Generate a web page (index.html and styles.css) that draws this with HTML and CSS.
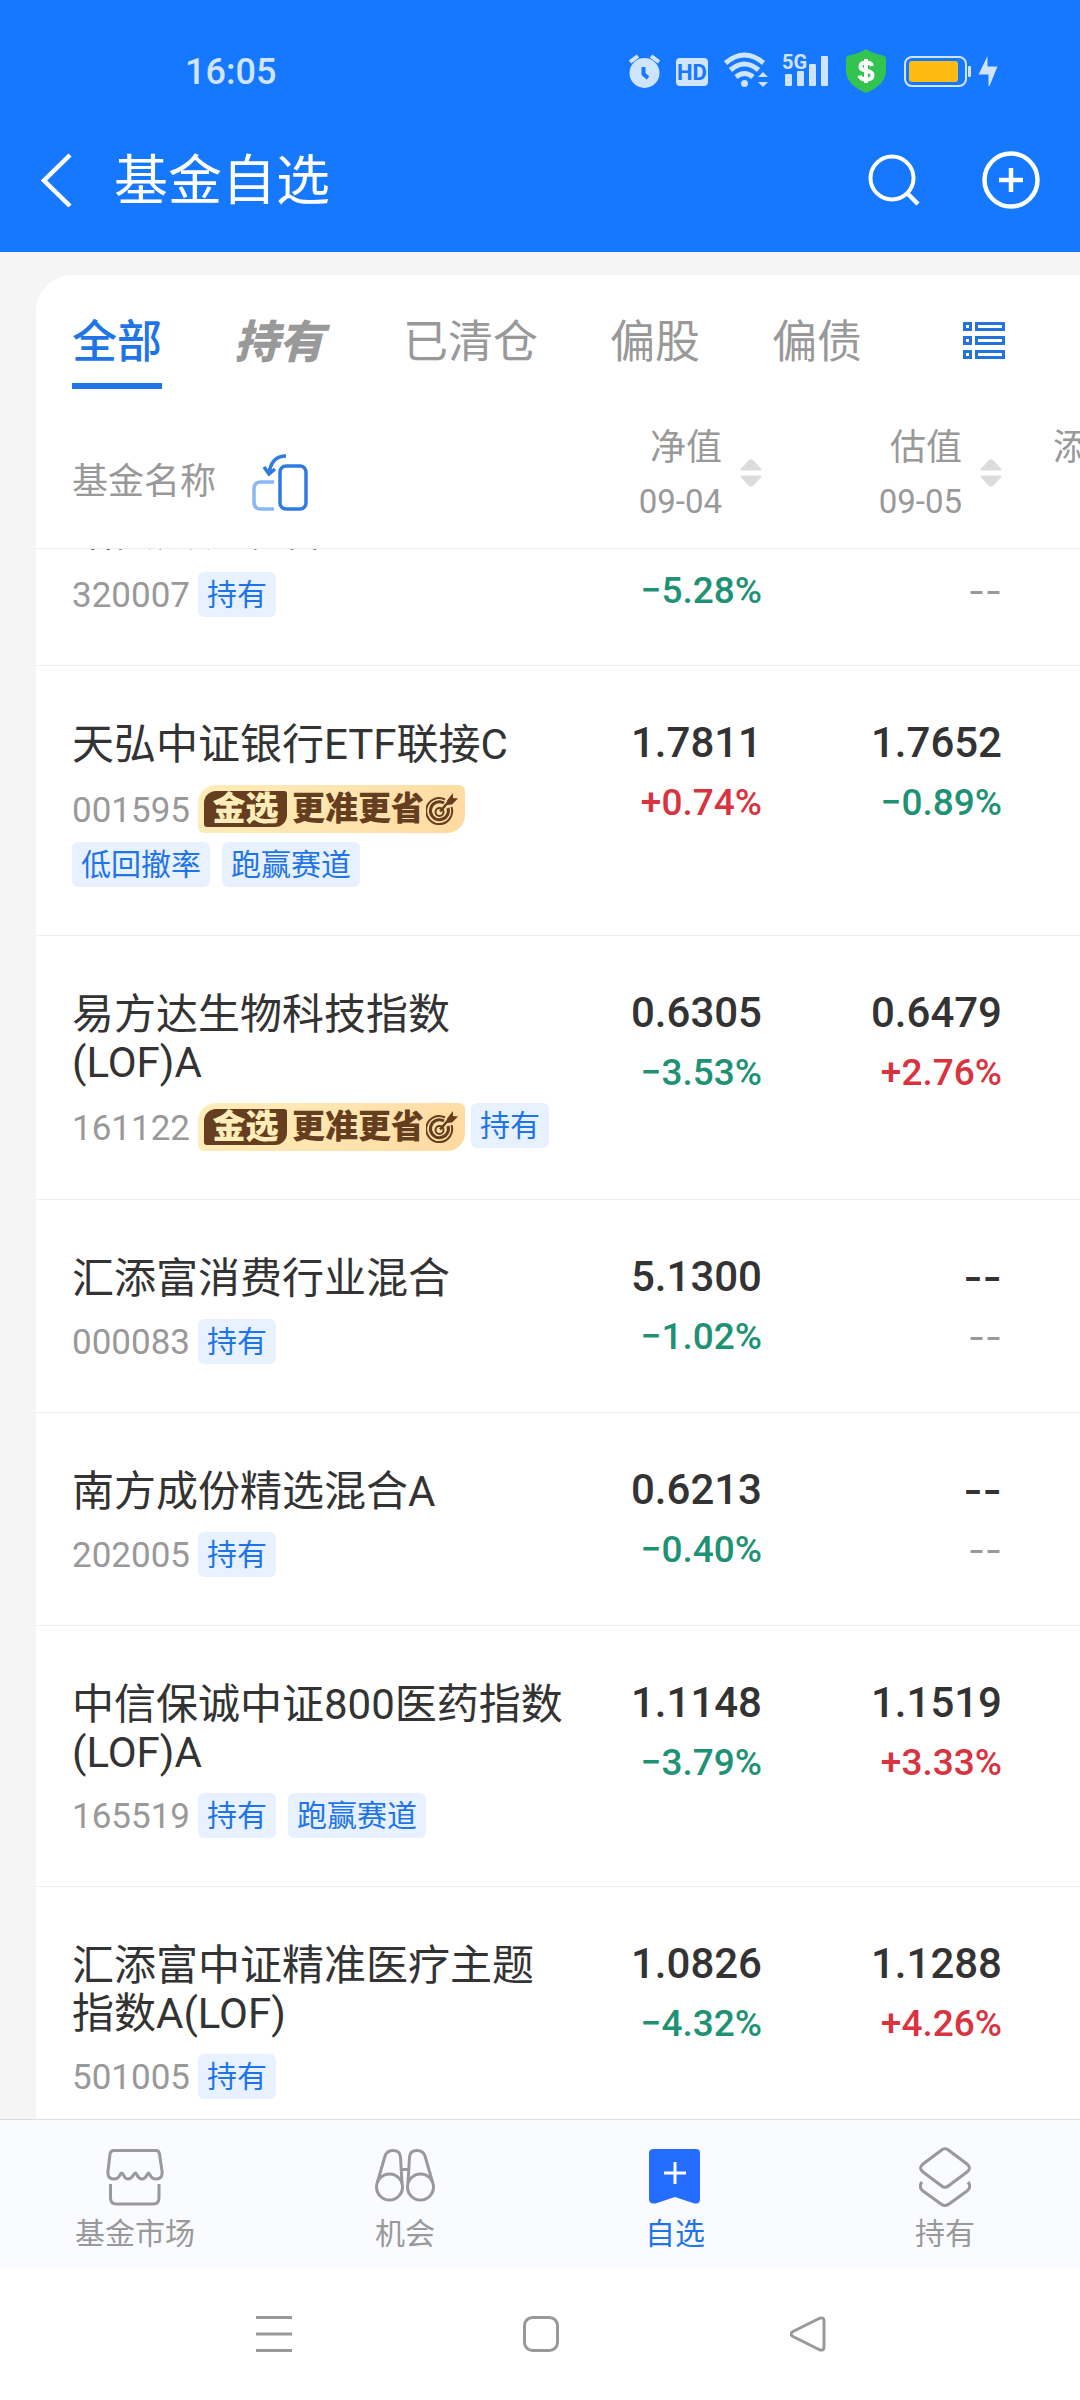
FILE: index.html
```html
<!DOCTYPE html>
<html lang="zh-CN">
<head>
<meta charset="utf-8">
<meta name="viewport" content="width=device-width, initial-scale=1">
<title>基金自选</title>
<link rel="stylesheet" href="styles.css">
</head>
<body>
<svg class="sprite" aria-hidden="true">
  <symbol id="sort" viewBox="0 0 22 28">
    <path d="M1 11.500Q0 11 1 9.500L8.500 1.500Q11-1 13.500 1.500L21 9.500Q22 11 21 11.500ZM1 16.500Q0 17 1 18.500L8.500 26.500Q11 29 13.500 26.500L21 18.500Q22 17 21 16.500Z" fill="#dcdcdc"/>
  </symbol>
  <symbol id="target" viewBox="0 0 32 32">
    <g fill="none" stroke="#643e1f">
      <path d="M19 6.500A13 13 0 1 0 25.500 14" stroke-width="2"/>
      <path d="M18 10A9 9 0 1 0 22 15" stroke-width="3"/>
      <circle cx="13.500" cy="19" r="4" stroke-width="2"/>
      <path d="M14 18.500L25 6" stroke-width="2.500"/>
    </g>
    <path d="M21 7.500L27 0V5L32 5.500L26 11.500L21 12Z" fill="#643e1f"/>
  </symbol>
</svg>

<header class="top">
  <div class="status">
    <span class="clock">16:05</span>
    <div class="indicators">
      <svg class="i-alarm" width="31" height="44" viewBox="0 0 31 44"><circle cx="15.500" cy="24" r="15" fill="#cfe4ff"/><path d="M1 13L9 7M30 13L22 7" stroke="#cfe4ff" stroke-width="4"/><path d="M14.500 18V25L19 29" fill="none" stroke="#1677ff" stroke-width="4"/></svg>
      <svg class="i-hd" width="32" height="44" viewBox="0 0 32 44"><rect y="9" width="32" height="28" rx="4" fill="#cfe4ff"/><text x="16" y="31" text-anchor="middle" class="hd-text">HD</text></svg>
      <svg class="i-wifi" width="44" height="44" viewBox="0 0 44 44"><g fill="none" stroke="#cfe4ff" stroke-width="5"><path d="M1.500 14Q20.500-2 39.500 14"/><path d="M6.500 21Q20.500 9 34.500 21"/><path d="M12 28Q20.500 21 29 28"/></g><circle cx="20.500" cy="34.500" r="3.500" fill="#cfe4ff"/><path d="M34 28L39 23L44 28ZM34 33H44L39 38Z" fill="#cfe4ff"/></svg>
      <svg class="i-signal" width="46" height="44" viewBox="0 0 46 44"><g fill="#cfe4ff"><rect x="3" y="25" width="7" height="12" rx="1"/><rect x="15" y="22" width="7" height="15" rx="1"/><rect x="27" y="15" width="7" height="22" rx="1"/><rect x="39" y="7" width="7" height="30" rx="1"/></g><text x="0" y="20" class="g-text">5G</text></svg>
      <svg class="i-shield" width="40" height="44" viewBox="0 0 40 44"><path d="M20 0Q26 4 37 6.500Q40 7 40 10V23Q39 36 20 44Q1 36 0 23V10Q0 7 3 6.500Q14 4 20 0Z" fill="#33c44f"/><path d="M26 17Q25 13.500 20 13.500Q14.500 13.500 14.500 17.500Q14.500 21 20 21.500Q26.500 22.500 26.500 26.500Q26.500 30.500 20 30.500Q14.500 30.500 13.500 26.500M20 10V34" fill="none" stroke="#fff" stroke-width="4"/></svg>
      <svg class="i-battery" width="67" height="44" viewBox="0 0 67 44"><rect x="1" y="8" width="61" height="29" rx="7" fill="none" stroke="#cfe4ff" stroke-width="2"/><rect x="5" y="12" width="49" height="21" rx="3" fill="#ffbb12"/><rect x="64" y="17" width="3" height="11" rx="1" fill="#cfe4ff"/></svg>
      <svg class="i-bolt" width="20" height="44" viewBox="0 0 20 44"><path d="M9.500 7V17.500H19.500L11.500 37H10.500V25.500H.500Z" fill="#cfe4ff"/></svg>
    </div>
  </div>
  <div class="titlebar">
    <button class="plain" type="button" aria-label="返回"><svg width="32" height="54" viewBox="0 0 32 54"><path d="M29 2L3 27.500L29 53" fill="none" stroke="#fff" stroke-width="4.500"/></svg></button>
    <h1>基金自选</h1>
    <button class="plain" type="button" aria-label="搜索"><svg width="52" height="54" viewBox="0 0 52 54"><circle cx="24" cy="25" r="21.500" fill="none" stroke="#fff" stroke-width="4"/><path d="M39 40L50 51" stroke="#fff" stroke-width="4.500"/></svg></button>
    <button class="plain" type="button" aria-label="添加"><svg width="58" height="58" viewBox="0 0 58 58"><g fill="none" stroke="#fff" stroke-width="4.500"><circle cx="29" cy="29" r="26.500"/><path d="M17 29H41M29 17V41"/></g></svg></button>
  </div>
</header>

<main>
  <section class="card">
    <nav class="tabs">
      <button class="tab active" type="button">全部</button>
      <button class="tab slanted" type="button">持有</button>
      <button class="tab" type="button">已清仓</button>
      <button class="tab" type="button">偏股</button>
      <button class="tab" type="button">偏债</button>
      <button class="plain view" type="button" aria-label="列表"><svg width="42" height="38" viewBox="0 0 42 38"><g fill="none" stroke="#2473dc" stroke-width="3"><rect x="1.500" y="1.500" width="6" height="6"/><rect x="13.500" y="1.500" width="27" height="6"/><rect x="1.500" y="15.500" width="6" height="6"/><rect x="13.500" y="15.500" width="27" height="6"/><rect x="1.500" y="29.500" width="6" height="6"/><rect x="13.500" y="29.500" width="27" height="6"/></g></svg></button>
    </nav>
    <table class="funds">
      <colgroup><col><col class="c-nav"><col class="c-est"><col class="c-more"></colgroup>
      <thead>
        <tr>
          <th><div class="name-head">基金名称<button class="plain" type="button" aria-label="横屏"><svg width="56" height="58" viewBox="0 0 56 58"><g fill="none" stroke-width="3.500"><path d="M22 29H9Q2 29 2 36V49Q2 56 9 56H22" stroke="#8ab8f5"/><rect x="28" y="13" width="26" height="43" rx="6" stroke="#2f7be0"/><path d="M34 3Q19 3 17 21M12 14L17 21L23 16" stroke="#2f7be0"/></g></svg></button></div></th>
          <th><button class="sorter" type="button"><span>净值<small>09-04</small></span><svg width="22" height="28"><use href="#sort"/></svg></button></th>
          <th><button class="sorter" type="button"><span>估值<small>09-05</small></span><svg width="22" height="28"><use href="#sort"/></svg></button></th>
          <th><div class="more">添</div></th>
        </tr>
      </thead>
      <tbody>
        <tr class="partial">
          <td><div class="fund"><div class="name">诺安成长混合</div><div class="meta"><span class="code">320007</span><span class="tag">持有</span></div></div></td>
          <td><div class="pct down">−5.28%</div></td>
          <td><div class="pct none">--</div></td><td></td>
        </tr>
        <tr>
          <td><div class="name">天弘中证银行ETF联接C</div><div class="meta"><span class="code">001595</span><span class="gold"><b>金选</b>更准更省<svg width="32" height="32"><use href="#target"/></svg></span><span class="tag">低回撤率</span><span class="tag">跑赢赛道</span></div></td>
          <td><div class="val">1.7811</div><div class="pct up">+0.74%</div></td>
          <td><div class="val">1.7652</div><div class="pct down">−0.89%</div></td><td></td>
        </tr>
        <tr>
          <td><div class="name">易方达生物科技指数(LOF)A</div><div class="meta"><span class="code">161122</span><span class="gold"><b>金选</b>更准更省<svg width="32" height="32"><use href="#target"/></svg></span><span class="tag">持有</span></div></td>
          <td><div class="val">0.6305</div><div class="pct down">−3.53%</div></td>
          <td><div class="val">0.6479</div><div class="pct up">+2.76%</div></td><td></td>
        </tr>
        <tr>
          <td><div class="name">汇添富消费行业混合</div><div class="meta"><span class="code">000083</span><span class="tag">持有</span></div></td>
          <td><div class="val">5.1300</div><div class="pct down">−1.02%</div></td>
          <td><div class="val dash">--</div><div class="pct none">--</div></td><td></td>
        </tr>
        <tr>
          <td><div class="name">南方成份精选混合A</div><div class="meta"><span class="code">202005</span><span class="tag">持有</span></div></td>
          <td><div class="val">0.6213</div><div class="pct down">−0.40%</div></td>
          <td><div class="val dash">--</div><div class="pct none">--</div></td><td></td>
        </tr>
        <tr>
          <td><div class="name">中信保诚中证800医药指数(LOF)A</div><div class="meta"><span class="code">165519</span><span class="tag">持有</span><span class="tag">跑赢赛道</span></div></td>
          <td><div class="val">1.1148</div><div class="pct down">−3.79%</div></td>
          <td><div class="val">1.1519</div><div class="pct up">+3.33%</div></td><td></td>
        </tr>
        <tr>
          <td><div class="name">汇添富中证精准医疗主题指数A(LOF)</div><div class="meta"><span class="code">501005</span><span class="tag">持有</span></div></td>
          <td><div class="val">1.0826</div><div class="pct down">−4.32%</div></td>
          <td><div class="val">1.1288</div><div class="pct up">+4.26%</div></td><td></td>
        </tr>
      </tbody>
    </table>
  </section>
</main>

<nav class="bottom">
  <a href="#market"><svg width="58" height="58" viewBox="0 0 58 58"><g fill="none" stroke="#999" stroke-width="3"><path d="M8 2.500H50Q53 2.500 53.500 6L56 23Q57 31 50 31Q46 31 44 27Q42.500 23 41 27Q39 31 36 31Q33 31 31 27Q29.500 23 27.500 27Q25 31 22 31Q19 31 17.500 27Q15.500 23 14 27Q12 31 8 31Q1 31 2 23L4 6Q4.500 2.500 8 2.500Z"/><path d="M4.500 36V50Q4.500 56 10.500 56H47Q53 56 53 50V36"/></g></svg>基金市场</a>
  <a href="#chance"><svg width="60" height="58" viewBox="0 0 60 58"><g fill="none" stroke="#999" stroke-width="3"><circle cx="14.500" cy="39" r="13"/><circle cx="45.500" cy="39" r="13"/><path d="M2.500 34L10 8Q12 2.500 18 2.500Q25 2.500 25.500 9L27 35M57.500 34L50 8Q48 2.500 42 2.500Q35 2.500 34.500 9L33 35M26 21.500H34"/></g></svg>机会</a>
  <a href="#watch" class="on"><svg width="52" height="58" viewBox="0 0 52 58"><path d="M5 1H47Q51 1 51 5V51Q51 57 44 55L26 49L8 55Q0 57 0 51V5Q0 1 5 1Z" fill="#256dff"/><path d="M15 25H37M26 14V36" stroke="#fff" stroke-width="3"/></svg>自选</a>
  <a href="#hold"><svg width="52" height="60" viewBox="0 0 52 60"><g fill="none" stroke="#999" stroke-width="3"><path d="M22 3.500Q26 0 30 3.500L48 17Q53 21 48 25L30 38.500Q26 42 22 38.500L4 25Q-1 21 4 17Z"/><path d="M3 35Q-1 40 4 44L22 57Q26 60 30 57L48 44Q53 40 49 35"/></g></svg>持有</a>
</nav>
<div class="system">
  <button class="plain" type="button" aria-label="最近任务"><svg width="36" height="36" viewBox="0 0 36 36"><path d="M0 1.500H36M0 18H36M0 34.500H36" stroke="#999" stroke-width="3"/></svg></button>
  <button class="plain" type="button" aria-label="主页"><svg width="36" height="36" viewBox="0 0 36 36"><rect x="1.500" y="1.500" width="33" height="33" rx="8" fill="none" stroke="#999" stroke-width="3"/></svg></button>
  <button class="plain" type="button" aria-label="后退"><svg width="36" height="36" viewBox="0 0 36 36"><path d="M3 15.500L29 2.500Q34 .500 34 5V31Q34 35.500 29 33.500L3 20.500Q-1 18 3 15.500Z" fill="none" stroke="#999" stroke-width="3"/></svg></button>
</div>
</body>
</html>
```
FILE: styles.css
```css
* { box-sizing: border-box; }

body {
  margin: 0;
  height: 100vh;
  display: flex;
  flex-direction: column;
  background: #f5f5f5;
  color: #333;
  font-family: Roboto, "Noto Sans CJK SC", sans-serif;
}

svg { display: block; flex: none; }
.sprite { display: none; }
button { font: inherit; color: inherit; border: 0; background: none; padding: 0; cursor: pointer; }
.plain { display: flex; flex: none; }

/* header */
.top { flex: none; background: #1677ff; color: #fff; }
.status {
  display: flex;
  align-items: center;
  justify-content: space-between;
  padding: 49px 82px 0 185px;
  height: 93px;
}
.clock { font-size: 36px; font-weight: 500; line-height: 44px; padding-top: 2px; color: #cfe4ff; }
.indicators { display: flex; align-items: center; gap: 16px; }
.i-signal { margin-left: -2px; }
.i-shield, .i-battery { margin-left: 2px; }
.i-bolt { margin-left: -9px; }
.hd-text { font: 700 22px Roboto, sans-serif; fill: #1677ff; }
.g-text { font: 700 20px Roboto, sans-serif; fill: #cfe4ff; }
.titlebar {
  display: flex;
  align-items: center;
  height: 159px;
  padding: 14px 40px 0 41px;
}
.titlebar h1 {
  flex: 1;
  margin: 0 0 0 41px;
  padding-top: 4px;
  font-size: 54px;
  font-weight: 400;
  line-height: 72px;
}
.titlebar .plain + .plain { margin-left: 62px; }

/* list card */
main { flex: 1; min-height: 0; overflow: hidden; padding: 23px 0 0 36px; }
.card { min-height: 100%; background: #fff; border-radius: 36px 0 0 0; }
.tabs {
  display: flex;
  gap: 72px;
  height: 114px;
  padding: 24px 75px 0 36px;
  color: #999;
  font-size: 45px;
}
.tab { height: 90px; line-height: 80px; padding: 4px 0 6px; white-space: nowrap; }
.tab.active { color: #1f74e8; font-weight: 500; padding-bottom: 0; border-bottom: 6px solid #1f74e8; }
.tab.slanted { width: 97px; font-weight: 900; font-style: italic; text-align: left; }
.view { height: 84px; margin-left: auto; align-items: center; }

.funds { width: 100%; table-layout: fixed; border-collapse: separate; border-spacing: 0; }
.c-nav { width: 180px; }
.c-est { width: 240px; }
.c-more { width: 78px; }
th, td { padding: 0; vertical-align: top; border-bottom: 1px solid #ededed; }
th { height: 160px; font-size: 36px; font-weight: 400; color: #999; }
.name-head { display: flex; align-items: center; gap: 36px; padding: 64px 0 0 36px; line-height: 58px; }
.sorter { display: flex; align-items: center; gap: 18px; margin-left: auto; padding-top: 29px; text-align: right; line-height: 53px; }
.sorter span { padding-top: 4px; }
.sorter small { display: block; font-size: 33px; }
.more { padding: 33px 0 0 51px; line-height: 53px; text-align: left; white-space: nowrap; }

td { padding: 53px 0 48px; text-align: right; }
td:first-child { padding-left: 36px; padding-right: 16px; text-align: left; }
.name { padding-top: 2px; margin-bottom: 16px; font-size: 42px; line-height: 48px; }
.meta { display: flex; flex-wrap: wrap; align-items: flex-start; row-gap: 9px; }
.code { align-self: center; padding-top: 2px; margin-right: 8px; font-size: 35px; line-height: 43px; color: #999; }
.tag {
  margin-right: 12px;
  padding: 0 9px;
  border-radius: 6px;
  background: #e7f1ff;
  color: #1f74e8;
  font-size: 30px;
  line-height: 45px;
}
.tag:last-child { margin-right: 0; }
.gold {
  display: flex;
  align-items: center;
  width: 267px;
  height: 48px;
  margin-right: 6px;
  padding-left: 6px;
  border-radius: 18px 6px 18px 6px;
  background: linear-gradient(120deg, #ffedb9, #ffe5b0 50%, #ffdaa0);
  color: #643e1f;
  font-size: 33px;
  font-weight: 900;
  line-height: 36px;
}
.gold b {
  width: 83px;
  height: 36px;
  margin-right: 5px;
  border-radius: 12px 3px 12px 3px;
  background: #643e1f;
  color: #ffedb9;
  font-weight: 900;
  text-align: center;
}
.gold svg { margin-left: 2px; }
.val { font-size: 42px; font-weight: 500; line-height: 48px; margin-bottom: 18px; }
.pct { font-size: 37px; font-weight: 500; line-height: 36px; }
.up { color: #d9333f; }
.down { color: #1f9275; }
.dash { font-family: Inter, Roboto, sans-serif; }
.none { color: #999; font-family: Inter, Roboto, sans-serif; font-weight: 400; }

/* first row, scrolled partly under the column heads */
.partial td { padding-top: 24px; }
.partial td:first-child { padding-top: 0; padding-bottom: 0; }
.fund { display: flex; flex-direction: column; justify-content: flex-end; height: 116px; padding-bottom: 48px; overflow: hidden; }

/* bottom bars */
.bottom { flex: none; display: flex; height: 149px; padding-top: 27px; background: #fafbff; border-top: 1px solid #ddd; }
.bottom a {
  flex: 1;
  display: flex;
  flex-direction: column;
  align-items: center;
  color: #999;
  font-size: 30px;
  line-height: 36px;
  text-decoration: none;
}
.bottom svg { height: 60px; margin-bottom: 9px; }
.bottom .on { color: #1f74e8; }
.system { flex: none; display: flex; height: 132px; padding: 0 138px 0 140px; background: #fff; }
.system .plain { flex: 1; align-items: center; justify-content: center; }
```
